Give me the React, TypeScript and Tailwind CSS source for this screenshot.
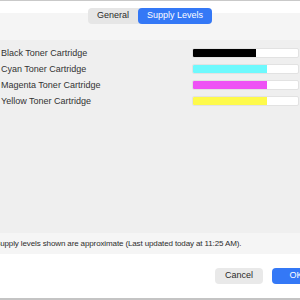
import React from "react";

const rows = [
  { label: "Black Toner Cartridge", color: "#000000", pct: 60 },
  { label: "Cyan Toner Cartridge", color: "#6ef9fd", pct: 70 },
  { label: "Magenta Toner Cartridge", color: "#ee52f5", pct: 70 },
  { label: "Yellow Toner Cartridge", color: "#fefa4b", pct: 70 },
];

export default function App() {
  return (
    <div
      className="w-[300px] h-[300px] overflow-hidden bg-white flex flex-col text-[9px] text-[#2d2d2d]"
      style={{ fontFamily: '"Liberation Sans", Arial, sans-serif' }}
    >
      <div className="h-px bg-[#c9c9c9]" />
      <div className="h-[7px] bg-white" />
      <div className="h-[16px] flex justify-center bg-[linear-gradient(to_bottom,#ffffff_5px,#f5f5f5_5px)]">
        <div className="flex h-[16px] w-[124px] rounded-[4px] bg-[#e6e6e6]">
          <div className="w-[50px] flex items-center justify-center text-[#2a2a2a]">General</div>
          <div className="flex-1 flex items-center justify-center rounded-[4px] bg-[#3478f6] text-white">
            Supply Levels
          </div>
        </div>
      </div>
      <div className="h-[16px] bg-[#f5f5f5]" />
      <div className="h-[193px] bg-[#efefef] pt-[5px] flex flex-col">
        {rows.map((r) => (
          <div key={r.label} className="h-[16px] flex items-center pl-[1px] pr-[1px]">
            <div className="flex-1 text-[#333333] leading-none">{r.label}</div>
            <div className="w-[107px] h-[10px] rounded-[2px] bg-white border border-[#e2e2e2] overflow-hidden">
              <div className="h-full" style={{ width: `${r.pct}%`, backgroundColor: r.color }} />
            </div>
          </div>
        ))}
      </div>
      <div className="h-[21px] bg-[#f5f5f5] flex items-center whitespace-nowrap text-[8px] tracking-[-0.12px] text-[#2d2d2d] -ml-[5px]">
        Supply levels shown are approximate (Last updated today at 11:25 AM).
      </div>
      <div className="flex-1 bg-white flex items-start pt-[14px] pl-[215px] gap-[9px]">
        <div className="w-[48px] h-[16px] shrink-0 rounded-[4px] bg-[#e9e9e9] flex items-center justify-center text-[#2a2a2a]">
          Cancel
        </div>
        <div className="w-[48px] h-[16px] shrink-0 rounded-[4px] bg-[#3478f6] flex items-center justify-center text-white">
          OK
        </div>
      </div>
      <div className="h-[2px] bg-[#c4c4c4]" />
    </div>
  );
}
